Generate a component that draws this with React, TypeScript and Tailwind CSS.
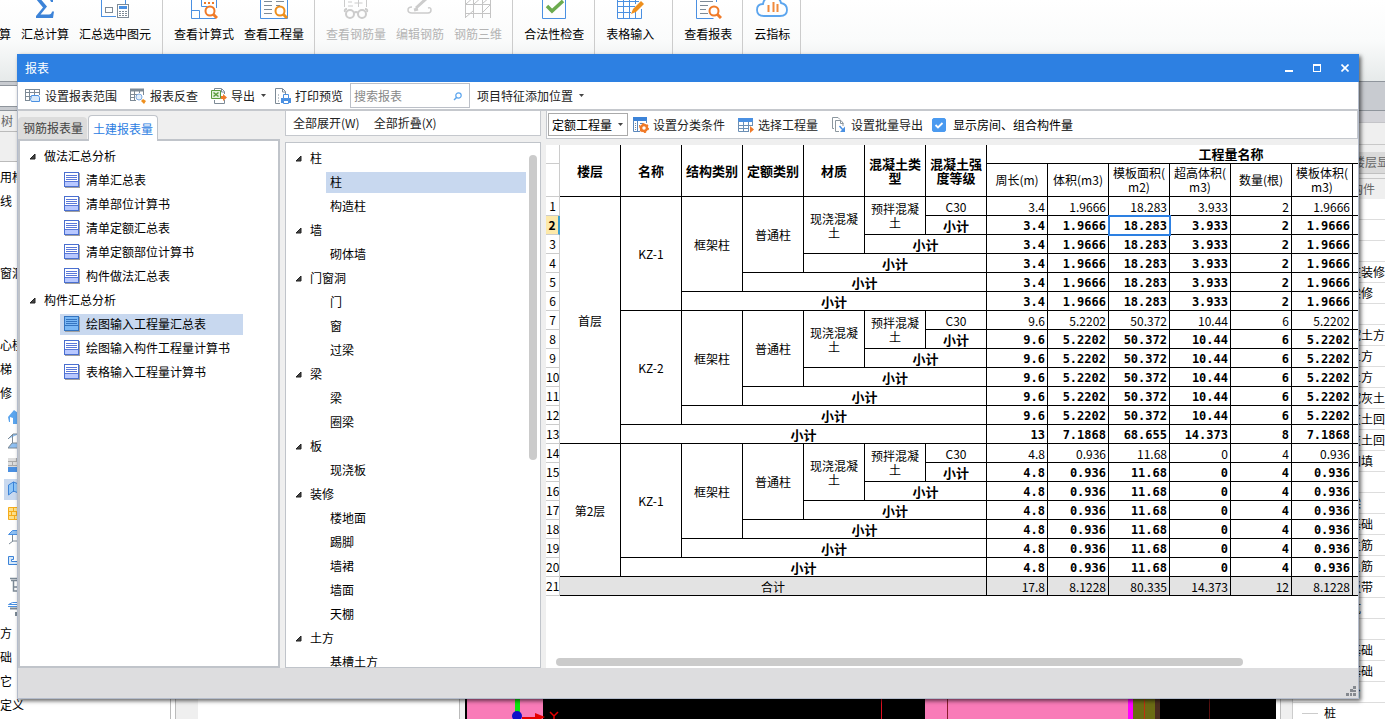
import type { ReactNode } from "react";

const icon16 = { width: 16, height: 16, viewBox: "0 0 16 16", fill: "none" } as const;
const icon24 = { width: 28, height: 24, viewBox: "0 0 28 24", fill: "none" } as const;

/* ---------- ribbon icons ---------- */

function SigmaIcon() {
  return (
    <svg {...icon24}>
      <path d="M5 2h17v5h-2q-.5-2.500-3-2.500h-7l6 7-6.500 8H18q2.500 0 3-3h2L22 23H5v-2l7-8.500L5 4z" fill="#3c83d8" />
    </svg>
  );
}

function SumSelectedIcon() {
  return (
    <svg {...icon24} shapeRendering="crispEdges">
      <path d="M15 21.500H.500V1.500h24v7" stroke="#4a90e2" />
      <path d="M4.500 12.500h7v5h-7z" stroke="#7d8a96" />
      <path d="M16.500 9.500h11v13h-11z" fill="#fff" stroke="#7d8a96" />
      <path d="M18 11h8v3h-8z" fill="#4a90e2" />
      <path d="M18 16h2m1 0h2m1 0h2M18 18h2m1 0h2m1 0h2M18 20h2m1 0h2m1 0h2" stroke="#7d8a96" />
    </svg>
  );
}

function Lens({ color }: { color: string }) {
  return (
    <g stroke={color}>
      <circle cx="20" cy="16" r="4.500" fill="#fff" strokeWidth="2" />
      <path d="M23 19l4 4" strokeWidth="3" />
    </g>
  );
}

function FormulaIcon() {
  return (
    <svg {...icon24}>
      <path d="M1.500 1v22.500h24V20M1.500 15.500h8v8M11.500 1v10.500h6M26.500 1v12" stroke="#4a90e2" />
      <path d="M14 8h2m2 0h2m2 0h2" stroke="#f07a28" strokeWidth="2" />
      <Lens color="#f07a28" />
    </svg>
  );
}

function QuantityIcon() {
  return (
    <svg {...icon24}>
      <path d="M.500 1v22.500h27V1" stroke="#4a90e2" />
      <path d="M4 6.500h8M4 10.500h8M4 14.500h8M4 18.500h8M16 6.500h8M16 10.500h4" stroke="#7d8a96" />
      <Lens color="#ee8f1d" />
    </svg>
  );
}

function GlassesIcon() {
  return (
    <svg {...icon24} stroke="#ccc">
      <path d="M2.500 12V1M24.500 12V1M6 7h4M6 11h5M16.500 4v8M12.500 8h8" />
      <path d="M3 17q-1-3 2-3M25 17q1-3-2-3" strokeWidth="2" />
      <circle cx="8" cy="19" r="4" strokeWidth="2" />
      <circle cx="20" cy="19" r="4" strokeWidth="2" />
      <path d="M12 18q2-2 4 0" strokeWidth="2" />
    </svg>
  );
}

function EditBarIcon() {
  return (
    <svg {...icon24} stroke="#ccc">
      <path d="M10 13l11-10M8 15l4-1" strokeWidth="3" />
      <path d="M6 12q-4 0-4 3t4 3h16q3 0 3-3t-3-2" strokeWidth="1.500" />
    </svg>
  );
}

function Rebar3dIcon() {
  return (
    <svg {...icon24} stroke="#c4c4c4">
      <path d="M1.500 23V4M9.500 23V1M18.500 23V1M26.500 23V1M1 9.500h26M1 18.500h26M2 9l8-7M10 9l8-7M18 9l8-7M2 22l7-6M18 18l8-8" />
    </svg>
  );
}

function CheckBoxIcon() {
  return (
    <svg {...icon24}>
      <path d="M2.500 1v22.500h23V1" stroke="#4a90e2" />
      <path d="M7 11l5 5L23 6" stroke="#6cab4f" strokeWidth="3.500" />
    </svg>
  );
}

function TableInputIcon() {
  return (
    <svg {...icon24}>
      <path d="M1.500 1v22.500h24V14M1 6.500h22M1 11.500h18M1 17.500h14M7.500 1v22M13.500 1v22M19.500 1v8M19.500 17v6" stroke="#4a90e2" />
      <path d="M15 19l2-5L25 6l3 3-8 8z" fill="#ee8f1d" />
    </svg>
  );
}

function ReportLensIcon() {
  return (
    <svg {...icon24}>
      <path d="M22.500 7V1M2.500 1v22.500h17" stroke="#4a90e2" />
      <path d="M6 6.500h13M6 10.500h8M6 14.500h6M6 18.500h8" stroke="#7d8a96" />
      <Lens color="#f07a28" />
    </svg>
  );
}

function CloudIcon() {
  return (
    <svg width="32" height="24" viewBox="0 0 32 24" fill="none">
      <path d="M8 21q-7 0-7-6t6-6Q8 2 16 2t9 6q6 1 6 7t-7 6z" stroke="#5ba5ee" strokeWidth="1.800" />
      <path d="M12.500 10v7M17.500 7v10M21.500 9v8" stroke="#f08a3c" strokeWidth="2" />
    </svg>
  );
}

/* ---------- dialog icons ---------- */

function RangeIcon() {
  return (
    <svg {...icon16}>
      <path d="M0 1.500h15M.500 1v11M4.500 1v11M9.500 1v6M14.500 1v6M0 4.500h15M0 8.500h6M0 12.500h5" stroke="#7d8a96" />
      <path d="M6.500 7.500h7l1 2v4h-8l-1-2z" fill="#d8eafb" stroke="#4a90e2" />
    </svg>
  );
}

function BackCheckIcon() {
  return (
    <svg {...icon16}>
      <path d="M0 2h14" stroke="#7d8a96" strokeWidth="3" />
      <path d="M.500 1v12M4.500 1v12M13.500 3v4M0 6.500h7M0 9.500h5M0 12.500h6M9.500 2v3" stroke="#7d8a96" />
      <circle cx="9" cy="9" r="3" fill="#e2effb" stroke="#7ea9e0" />
      <path d="M11 13l2-2 3 2-2 3z" fill="#ee8f1d" />
    </svg>
  );
}

function ExportIcon() {
  return (
    <svg {...icon16}>
      <path d="M3.500 3V.500h7l3 3V6M13.500 12v3.500h-10V12M10.500 1v3h3" stroke="#7d8a96" />
      <path d="M.500 2.500h9v8h-9z" fill="#e4f1dd" stroke="#5c9c3e" />
      <path d="M2.500 4.500l5 4m0-4l-5 4" stroke="#5c9c3e" strokeWidth="1.500" />
      <path d="M10 8h2V6l4 3.500-4 3.500v-2h-2z" fill="#f07a28" />
    </svg>
  );
}

function PreviewIcon() {
  return (
    <svg {...icon16}>
      <path d="M5 15.500H.500V.500h7l3 3V6M7.500 1v3h3" stroke="#7d8a96" />
      <path d="M3 7h1M3 10h1M3 13h1" stroke="#7d8a96" />
      <path d="M6 10h10v5H6z" fill="#4a90e2" />
      <path d="M8.500 6.500h5v4h-5zM8.500 12.500h5v3h-5z" fill="#fff" stroke="#4a90e2" />
    </svg>
  );
}

function ClassifyIcon() {
  return (
    <svg {...icon16}>
      <path d="M0 2h14" stroke="#3c83d8" strokeWidth="4" />
      <path d="M.500 3v11.500H7M4.500 4v10M13.500 3v3M7 6.500h3" stroke="#5b88bd" />
      <path d="M2 6.500h1M2 8.500h1M2 10.500h1M2 12.500h1M6 8.500h1" stroke="#7d8a96" />
      <circle cx="11" cy="11" r="3" stroke="#f07a28" strokeWidth="2.500" />
      <circle cx="11" cy="11" r="4.200" stroke="#f07a28" strokeWidth="1.600" strokeDasharray="2 2.400" />
    </svg>
  );
}

function PickIcon() {
  return (
    <svg {...icon16}>
      <path d="M0 3h15" stroke="#4a90e2" strokeWidth="4" />
      <path d="M.500 4v10.500H11M5.500 5v9M10.500 5v9M14.500 4v5M0 8.500h15M0 11.500h11" stroke="#6b8fb5" />
      <path d="M12 9l4 3.500-4 3.500z" fill="#f07a28" />
    </svg>
  );
}

function BatchIcon() {
  return (
    <svg {...icon16}>
      <path d="M3 11.500H1.500V.500H7l2 2" stroke="#8c979f" />
      <path d="M8 14.500H4.500v-11H10l2 2.500v3M9.500 4v2.500h3" stroke="#8c979f" />
      <path d="M8.500 9l4 4.500" stroke="#4a90e2" strokeWidth="1.500" />
      <path d="M14 9.500V15H9z" fill="#4a90e2" />
    </svg>
  );
}

function SheetIcon({ active }: { active?: boolean }) {
  return (
    <svg {...icon16} shapeRendering="crispEdges" className="shrink-0">
      <path d="M1 1h15v15H1z" fill="#a0a0a0" />
      <path d="M.500 .500h14v14H.500z" fill={active ? "#7ab8f5" : "#fff"} stroke={active ? "#3474c0" : "#4a6fd0"} />
      <path d="M1 10h13v4H1z" fill={active ? "#7ab8f5" : "#b8c8ff"} />
      <path d="M2 3.500h11M2 5.500h11M2 7.500h11M1 9.500h13" stroke={active ? "#3474c0" : "#5a78d8"} />
    </svg>
  );
}

function Expander() {
  return (
    <svg width="7" height="7" viewBox="0 0 7 7" className="shrink-0">
      <path d="M6 1v5H1z" fill="#444" stroke="#222" />
    </svg>
  );
}

function Caret() {
  return (
    <svg width="5" height="3" viewBox="0 0 5 3">
      <path d="M0 0h5L2.500 3z" fill="#444" />
    </svg>
  );
}

/* ---------- main window behind the dialog ---------- */

type RibbonItem = { label: string; icon?: ReactNode; off?: boolean };

const ribbon: { pad: string; items: RibbonItem[] }[] = [
  {
    pad: "-ml-px pr-[11px]",
    items: [
      { label: "算" },
      { label: "汇总计算", icon: <SigmaIcon /> },
      { label: "汇总选中图元", icon: <SumSelectedIcon /> },
    ],
  },
  {
    pad: "pl-[11px] pr-[10px]",
    items: [
      { label: "查看计算式", icon: <FormulaIcon /> },
      { label: "查看工程量", icon: <QuantityIcon /> },
    ],
  },
  {
    pad: "pl-[11px] pr-[10px]",
    items: [
      { label: "查看钢筋量", icon: <GlassesIcon />, off: true },
      { label: "编辑钢筋", icon: <EditBarIcon />, off: true },
      { label: "钢筋三维", icon: <Rebar3dIcon />, off: true },
    ],
  },
  { pad: "pl-[11px] pr-[10px]", items: [{ label: "合法性检查", icon: <CheckBoxIcon /> }] },
  { pad: "pl-[11px] pr-[18px]", items: [{ label: "表格输入", icon: <TableInputIcon /> }] },
  { pad: "pl-[11px] pr-[10px]", items: [{ label: "查看报表", icon: <ReportLensIcon /> }] },
  { pad: "pl-[11px] pr-[10px]", items: [{ label: "云指标", icon: <CloudIcon /> }] },
];

function Ribbon() {
  return (
    <header className="flex h-[82px] shrink-0 overflow-hidden border-b border-[#8f959c] bg-linear-to-b from-white via-[#fafbfb] to-[#e6eaea]">
      {ribbon.map((group, i) => (
        <div key={i} className={`flex items-start gap-[10px] border-r border-[#ccc] ${group.pad}`}>
          {group.items.map((item) => (
            <button
              key={item.label}
              disabled={item.off}
              className={`-mt-[5px] flex flex-col items-center gap-[7px] whitespace-nowrap leading-4 ${item.off ? "text-[#b4b4b4]" : "text-black"}`}
            >
              <span className="flex h-6 items-center">{item.icon}</span>
              {item.label}
            </button>
          ))}
        </div>
      ))}
    </header>
  );
}

const navIcons: ReactNode[] = [
  <path key="a" d="M0 8l6-7 4 3v11H5V9L2 8v5H1z" fill="#5ba5ee" />,
  <path key="b" d="M0 6l5-5h6M4.500 1v9M0 15l4-5h7v5z" fill="#8fc0f2" stroke="#7d8a96" />,
  <g key="c">
    <path d="M0 1h16v10H0z" fill="#ddd" />
    <path d="M0 4.500h16M0 8.500h16M4.500 5v3M8.500 1v3" stroke="#aaa" />
    <path d="M0 10h16v5H0z" fill="#4a90e2" />
  </g>,
  <path key="d" d="M.500 4l5-3 5 2v9l-5-2-5 4zM5.500 1v10" fill="#8fc6f7" stroke="#3c83d8" />,
  <path key="e" d="M.500 2.500h15v12H.500zM0 6.500h16M0 10.500h16M5.500 3v3M3.500 7v3M8.500 7v3M6.500 11v3" fill="#fde08a" stroke="#f5ac1b" />,
  <g key="f">
    <path d="M4.500 6v6h8M5 12l-4 3" stroke="#7d8a96" />
    <path d="M.500 5.500l4-4h9v4h-13z" fill="#8fc0f2" stroke="#4a90e2" />
  </g>,
  <path key="g" d="M.500 3.500h5v3h-2v2h9v3H.500z" fill="#d8eafb" stroke="#3c83d8" />,
  <path key="h" d="M2 1.500h14M3 3.500h12M5.500 4v10h8M6 10h5" stroke="#7d8a96" strokeWidth="1.500" />,
  <g key="i">
    <path d="M.500 3.500l4-2h9v2zM0 5.500h15" stroke="#4a90e2" />
    <path d="M2 7.500h13M8 11v4" stroke="#7d8a96" strokeWidth="2" />
  </g>,
];

const navTop = ["用构", "线", "", "", "窗洞", "", "", "心楼", "梯", "修"];
const navBottom = ["方", "础", "它", "定义"];

function NavPanel() {
  return (
    <aside className="w-[171px] shrink-0 border-r border-[#bbb] bg-white">
      <div className="h-[21px] border-b border-[#bbb] bg-[#efefef] pl-px leading-5 text-[#666]">树</div>
      <div className="mb-[3px] h-[30px] border-b border-[#bbb] bg-[#efefef]" />
      {navTop.map((t, i) => (
        <div key={i} className="h-6 leading-6">{t}</div>
      ))}
      {navIcons.map((ic, i) => (
        <div key={i} className="flex h-6 items-center pl-1">
          <span className={`flex h-[21px] flex-1 items-center pl-1 ${i === 3 ? "bg-[#c9d9ef]" : ""}`}>
            <svg {...icon16}>{ic}</svg>
          </span>
        </div>
      ))}
      {navBottom.map((t) => (
        <div key={t} className="h-6 leading-6">{t}</div>
      ))}
    </aside>
  );
}

const components = [
  "", "", "", "柱装修", "梁修", "", "挖土方", "土方", "土方", "挖灰土", "灰土回",
  "灰土回", "回填", "", "梁", "基础", "主筋", "负筋", "板带", "坑", "",
  "基础", "基础", "台",
];

function ComponentPanel() {
  return (
    <aside className="w-[105px] shrink-0 overflow-hidden border-l border-[#bbb] bg-[#efefef] pl-[11px]">
      <div className="h-3 border-b border-[#c4c4c8] bg-[#d3d3d8]" />
      <div className="mb-[7px] h-[22px] border-b border-[#c8c8c8]" />
      <div className="h-[22px] overflow-hidden whitespace-nowrap border-b border-[#c0c0c0] bg-[#dadada] pl-[61px] leading-5 text-[#666]">
        楼层显
      </div>
      <div className="mt-1 h-[21px] border-t border-[#c8c8c8] pl-[59px] leading-5 text-[#666]">构件</div>
      <div className="border-l border-[#ccc] bg-white">
        {components.map((c, i) => (
          <div key={i} className="h-[21px] overflow-hidden whitespace-nowrap border-b border-[#ddd] pl-[56px] leading-5">
            {c}
          </div>
        ))}
        <div className="flex h-[21px] items-center gap-[6px] border-b border-[#ddd] pl-[9px]">
          <span className="w-4 border-t border-[#ccc]" />
          桩
        </div>
      </div>
    </aside>
  );
}

function ModelView() {
  return (
    <div className="flex flex-1 items-end overflow-hidden bg-black">
      <svg width="811" height="20" viewBox="0 0 811 20">
        <path d="M0 0h811v20H0z" fill="#000" />
        <path d="M2 0h76v20H2zM460 0h203v20H460z" fill="#f97bb8" />
        <path d="M50 0h5v15h-5z" fill="#0ce60c" />
        <circle cx="52" cy="17" r="5" fill="#1010c8" />
        <path d="M57 18h13v-4l10 4-4 2H57z" fill="#e60000" />
        <path d="M85 13l4 4 4-4M89 17v3" stroke="#e60000" strokeWidth="1.500" fill="none" />
        <path d="M416.500 0v20" stroke="#e01020" />
        <path d="M482.500 0v20" stroke="#8c1c2c" />
        <path d="M663 0h5v20h-5z" fill="#f0f" />
        <path d="M668 0h22v20h-22z" fill="#6b6b14" />
        <path d="M690 0h5v20h-5z" fill="#4a2c20" />
        <path d="M679.500 0v20" stroke="#c03010" />
        <path d="M744.500 0v20" stroke="#5a1010" />
      </svg>
    </div>
  );
}

/* ---------- report dialog ---------- */

function ToolButton({ icon, label, caret }: { icon?: ReactNode; label: string; caret?: boolean }) {
  return (
    <button className="flex shrink-0 items-center gap-1 whitespace-nowrap text-[#222]">
      {icon}
      {label}
      {caret && <span className="px-[2px]"><Caret /></span>}
    </button>
  );
}

function TitleBar() {
  return (
    <div className="flex h-7 shrink-0 items-center justify-between bg-[#2d80e2] pl-2 pr-[10px] text-white">
      <h1>报表</h1>
      <div className="flex gap-5">
        <button aria-label="最小化">
          <svg width="8" height="8" viewBox="0 0 8 8"><path d="M0 6h8v2H0z" fill="#fff" /></svg>
        </button>
        <button aria-label="最大化">
          <svg width="8" height="8" viewBox="0 0 8 8" shapeRendering="crispEdges">
            <path d="M0 0h8v8H0zM1 2v5h6V2z" fill="#fff" fillRule="evenodd" />
          </svg>
        </button>
        <button aria-label="关闭">
          <svg width="8" height="8" viewBox="0 0 8 8"><path d="M.500 .500l7 7m0-7l-7 7" stroke="#fff" strokeWidth="1.600" /></svg>
        </button>
      </div>
    </div>
  );
}

function MainToolbar() {
  return (
    <div className="flex h-[29px] shrink-0 items-center gap-[7px] border-b-2 border-[#c5c8cd] bg-white pl-[7px]">
      <div className="flex items-center gap-[13px]">
        <ToolButton icon={<RangeIcon />} label="设置报表范围" />
        <ToolButton icon={<BackCheckIcon />} label="报表反查" />
        <ToolButton icon={<ExportIcon />} label="导出" caret />
      </div>
      <ToolButton icon={<PreviewIcon />} label="打印预览" />
      <div className="flex h-[25px] w-[120px] items-center border border-[#bcc0c8] pl-[3px] pr-1">
        <input aria-label="搜索报表" placeholder="搜索报表" className="w-full min-w-0 outline-none placeholder:text-[#888]" />
        <svg width="14" height="10" viewBox="0 0 14 10" fill="none" className="shrink-0">
          <circle cx="7.500" cy="4.500" r="2.700" stroke="#5ba5ee" strokeWidth="1.200" />
          <path d="M5.500 6.500L3 9" stroke="#5ba5ee" strokeWidth="1.500" />
        </svg>
      </div>
      <ToolButton label="项目特征添加位置" caret />
    </div>
  );
}

const reportTree = [
  { name: "做法汇总分析", items: ["清单汇总表", "清单部位计算书", "清单定额汇总表", "清单定额部位计算书", "构件做法汇总表"] },
  { name: "构件汇总分析", items: ["绘图输入工程量汇总表", "绘图输入构件工程量计算书", "表格输入工程量计算书"] },
];

function ReportTree() {
  return (
    <section className="flex w-[262px] shrink-0 flex-col pt-1">
      <div className="flex items-end">
        <button className="mr-px h-[22px] rounded-t-sm bg-[#dcdcdc] pl-[5px] pr-1 text-[#444]">钢筋报表量</button>
        <button className="z-10 -mb-[2px] h-[26px] rounded-t-sm border border-b-0 border-[#c0c4ca] bg-white px-1 text-[#2d80e2]">土建报表量</button>
      </div>
      <div className="flex-1 overflow-hidden border-2 border-[#c0c4ca] bg-white pt-[3px]">
        {reportTree.map((g) => (
          <div key={g.name}>
            <div className="flex h-6 items-center gap-2 pl-[9px]"><Expander />{g.name}</div>
            {g.items.map((it) => {
              const active = it === "绘图输入工程量汇总表";
              return (
                <div key={it} className="flex h-6 items-center pl-10 pr-[35px]">
                  <button className={`flex h-[21px] w-full items-center gap-[6px] whitespace-nowrap pl-1 ${active ? "bg-[#c8d8ef]" : ""}`}>
                    <SheetIcon active={active} />
                    {it}
                  </button>
                </div>
              );
            })}
          </div>
        ))}
      </div>
    </section>
  );
}

const elementTree = [
  { name: "柱", items: ["柱", "构造柱"] },
  { name: "墙", items: ["砌体墙"] },
  { name: "门窗洞", items: ["门", "窗", "过梁"] },
  { name: "梁", items: ["梁", "圈梁"] },
  { name: "板", items: ["现浇板"] },
  { name: "装修", items: ["楼地面", "踢脚", "墙裙", "墙面", "天棚"] },
  { name: "土方", items: ["基槽土方"] },
];

function ElementTree() {
  return (
    <section className="flex w-[256px] shrink-0 flex-col gap-[6px]">
      <div className="flex h-[25px] shrink-0 items-center gap-[14px] border border-t-0 border-[#c5c8cd] bg-white pl-[7px] text-[#222]">
        <button>全部展开(W)</button>
        <button>全部折叠(X)</button>
      </div>
      <div className="flex min-h-0 flex-1 overflow-hidden border border-[#c0c4ca] bg-white">
        <div className="flex-1 pt-[3px]">
          {elementTree.map((g, gi) => (
            <div key={g.name}>
              <div className="flex h-6 items-center gap-2 pl-[9px]"><Expander />{g.name}</div>
              {g.items.map((it, i) => (
                <div key={it} className="flex h-6 items-center pl-10">
                  <button className={`h-[21px] w-full pl-1 text-left ${gi === 0 && i === 0 ? "bg-[#c8d8ef]" : ""}`}>{it}</button>
                </div>
              ))}
            </div>
          ))}
        </div>
        <div className="w-[14px] px-[3px] pt-3">
          <div className="h-[305px] rounded-full bg-[#cbcbcb]" />
        </div>
      </div>
    </section>
  );
}

const keyColumns = ["楼层", "名称", "结构类别", "定额类别", "材质", "混凝土类型", "混凝土强度等级"];
const quantityColumns = [["周长(m)"], ["体积(m3)"], ["模板面积(", "m2)"], ["超高体积(", "m3)"], ["数量(根)"], ["模板体积(", "m3)"], [""]];

const kz1 = ["3.4", "1.9666", "18.283", "3.933", "2", "1.9666"];
const kz2 = ["9.6", "5.2202", "50.372", "10.44", "6", "5.2202"];
const kz1Second = ["4.8", "0.936", "11.68", "0", "4", "0.936"];

const floors = [
  {
    name: "首层",
    members: [
      { name: "KZ-1", values: kz1 },
      { name: "KZ-2", values: kz2 },
    ],
    total: ["13", "7.1868", "68.655", "14.373", "8", "7.1868"],
  },
  { name: "第2层", members: [{ name: "KZ-1", values: kz1Second }], total: kz1Second },
];
const grandTotal = ["17.8", "8.1228", "80.335", "14.373", "12", "8.1228"];

type Row = { keys: ReactNode[]; values: string[]; bold: boolean };

function KeyCell({ children, rows = 1, cols = 1 }: { children: ReactNode; rows?: number; cols?: number }) {
  return (
    <td rowSpan={rows} colSpan={cols} className="border-b border-r border-black px-1 pt-px text-center">
      {children}
    </td>
  );
}

function Subtotal({ cols }: { cols: number }) {
  return (
    <KeyCell cols={cols}>
      <b className="text-[13px] leading-[14px]">小计</b>
    </KeyCell>
  );
}

function buildRows() {
  const rows: Row[] = [];
  for (const floor of floors) {
    floor.members.forEach((m, i) => {
      const first = [
        <KeyCell key="n" rows={6}>{m.name}</KeyCell>,
        <KeyCell key="s" rows={5}>框架柱</KeyCell>,
        <KeyCell key="d" rows={4}>普通柱</KeyCell>,
        <KeyCell key="m" rows={3}>现浇混凝土</KeyCell>,
        <KeyCell key="t" rows={2}>预拌混凝土</KeyCell>,
        <KeyCell key="g">C30</KeyCell>,
      ];
      if (i === 0) first.unshift(<KeyCell key="f" rows={floor.members.length * 6 + 1}>{floor.name}</KeyCell>);
      rows.push({ keys: first, values: m.values, bold: false });
      for (let cols = 1; cols <= 5; cols++) {
        rows.push({ keys: [<Subtotal key="s" cols={cols} />], values: m.values, bold: true });
      }
    });
    rows.push({ keys: [<Subtotal key="s" cols={6} />], values: floor.total, bold: true });
  }
  rows.push({ keys: [<KeyCell key="t" cols={7}>合计</KeyCell>], values: grandTotal, bold: false });
  return rows;
}

const rows = buildRows();

function QuantityTable() {
  return (
    <table className="w-[929px] table-fixed border-separate border-spacing-0 leading-[14px]">
      <colgroup>
        <col className="w-[14px]" />
        {[...keyColumns, ...quantityColumns, "more"].map((_, i) => (
          <col key={i} className="w-[61px]" />
        ))}
      </colgroup>
      <thead className="text-[13px]">
        <tr className="h-[19px]">
          <td className="border-b border-r border-[#ccc]" />
          {keyColumns.map((k) => (
            <th key={k} rowSpan={2} className="border-b border-r border-black px-1">{k}</th>
          ))}
          <th colSpan={8} className="border-b border-black">工程量名称</th>
        </tr>
        <tr className="h-[33px]">
          <td className="border-b border-r border-[#ccc]" />
          {[...quantityColumns, [""]].map((lines, i) => (
            <th key={i} className="border-b border-r border-black text-xs leading-[14px] font-normal">
              {lines.map((l) => <div key={l}>{l}</div>)}
            </th>
          ))}
        </tr>
      </thead>
      <tbody>
        {rows.map((row, r) => (
          <tr key={r} className={`h-[19px] ${r === rows.length - 1 ? "bg-[#e3e3e3]" : ""}`}>
            <th
              className={`border-b border-b-[#ccc] text-center ${r === 1 ? "border-r-2 border-r-[#3a9fd0] bg-[#fde9a9] font-bold" : "border-r border-r-[#ccc] bg-white font-normal"}`}
            >
              {r + 1}
            </th>
            {row.keys}
            {[...row.values, "", ""].map((v, c) => (
              <td
                key={c}
                className={`border-b border-r border-black pr-[2px] pt-[2px] text-right ${row.bold ? "font-['DejaVu_Sans_Mono',monospace] font-bold" : ""} ${r === 1 && c === 2 ? "relative outline-2 -outline-offset-1 outline-[#2d80e2]" : ""}`}
              >
                {v}
              </td>
            ))}
          </tr>
        ))}
      </tbody>
    </table>
  );
}

function QuantityPane() {
  return (
    <section className="flex min-w-0 flex-1 flex-col">
      <div className="mb-[6px] flex h-7 shrink-0 items-center gap-[13px] border border-t-0 border-[#c5c8cd] bg-white pl-px">
        <div className="flex items-center gap-[5px]">
          <div className="relative">
            <select aria-label="工程量类型" className="h-[23px] w-20 appearance-none border border-[#aaa] bg-white pl-[3px] outline-none">
              <option>定额工程量</option>
            </select>
            <span className="pointer-events-none absolute inset-y-0 right-[5px] flex items-center"><Caret /></span>
          </div>
          <ToolButton icon={<ClassifyIcon />} label="设置分类条件" />
        </div>
        <ToolButton icon={<PickIcon />} label="选择工程量" />
        <div className="flex items-center gap-[9px]">
          <ToolButton icon={<BatchIcon />} label="设置批量导出" />
          <label className="flex items-center gap-[7px] whitespace-nowrap">
            <span className="relative flex">
              <input type="checkbox" defaultChecked className="peer size-[14px] appearance-none rounded-xs border border-[#4a9af0] checked:bg-[#4a9af0]" />
              <svg width="14" height="14" viewBox="0 0 14 14" fill="none" className="pointer-events-none absolute inset-0 hidden peer-checked:block">
                <path d="M3.500 7l2.500 2.500L10.500 5" stroke="#fff" strokeWidth="1.800" />
              </svg>
            </span>
            显示房间、组合构件量
          </label>
        </div>
      </div>
      <div className="flex min-h-0 flex-1 flex-col justify-between overflow-hidden bg-white">
        <div className="min-h-0 overflow-hidden">
          <QuantityTable />
        </div>
        <div className="mb-[2px] ml-[10px] mr-[115px] h-2 shrink-0 rounded-full bg-[#cbcbcb]" />
      </div>
    </section>
  );
}

function ReportDialog() {
  return (
    <div
      role="dialog"
      aria-label="报表"
      className="absolute bottom-5 left-[17px] right-[26px] top-[54px] flex flex-col bg-[#efefef] shadow-[2px_2px_4px_rgba(0,0,0,0.6)]"
    >
      <TitleBar />
      <div className="flex min-h-0 flex-1 flex-col border border-t-0 border-[#b4bccb]">
        <MainToolbar />
        <div className="flex min-h-0 flex-1 gap-[5px]">
          <ReportTree />
          <ElementTree />
          <QuantityPane />
        </div>
        <footer className="flex h-[30px] shrink-0 items-end justify-end bg-[#dddddf] p-[2px]">
          <svg width="10" height="10" viewBox="0 0 10 10">
            <path d="M7 0h3v3H7zM4 3h3v3H4zM7 4h3v2H7zM0 7h3v3H0zM4 7h2v3H4zM7 7h3v3H7z" fill="#85898f" />
          </svg>
        </footer>
      </div>
    </div>
  );
}

export default function App() {
  return (
    <div className="relative flex h-screen flex-col overflow-hidden bg-white font-['Noto_Sans_CJK_SC',sans-serif] text-xs text-black">
      <Ribbon />
      <div className="flex h-[29px] shrink-0 items-center border-b border-[#8f959c] bg-[#c8cbd0]">
        <div className="h-[22px] w-20 border border-l-0 border-[#8f959c] bg-white" />
      </div>
      <div className="flex min-h-0 flex-1 overflow-hidden">
        <NavPanel />
        <div className="ml-1 w-[23px] border-l border-[#bbb] bg-[#efefef]" />
        <div className="w-[262px] border-r border-[#bbb]" />
        <div className="w-[5px] bg-[#efefef]" />
        <ModelView />
        <div className="w-1" />
        <ComponentPanel />
      </div>
      <ReportDialog />
    </div>
  );
}
